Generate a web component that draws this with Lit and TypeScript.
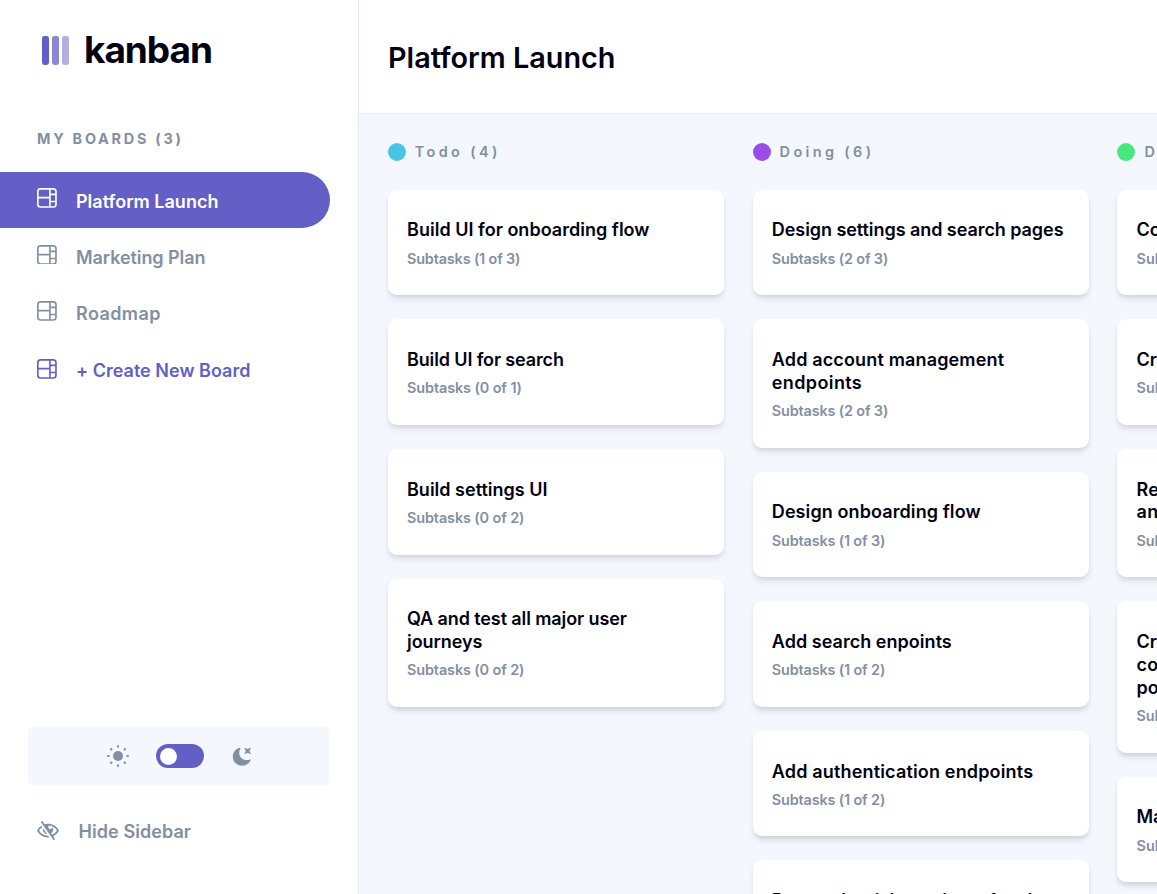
import { LitElement, html, css, svg } from "lit";
import { customElement, property } from "lit/decorators.js";

const BOARD =
  "M0 2.889A2.889 2.889 0 0 1 2.889 0H13.11A2.889 2.889 0 0 1 16 2.889V13.11A2.888 2.888 0 0 1 13.111 16H2.89A2.889 2.889 0 0 1 0 13.111V2.89Zm1.333 5.555v4.667c0 .859.697 1.556 1.556 1.556h6.889V8.444H1.333Zm8.445-1.333V1.333h-6.89A1.556 1.556 0 0 0 1.334 2.89V7.11h8.445Zm4.889-1.333H11.11v4.444h3.556V5.778Zm0 5.778H11.11v3.11h2a1.556 1.556 0 0 0 1.556-1.555v-1.555Zm0-7.112V2.89a1.555 1.555 0 0 0-1.556-1.556h-2v3.111h3.556Z";
const EYE =
  "M8.522 11.223a4.252 4.252 0 0 1-3.654-5.22l3.654 5.22ZM9 12.25A8.685 8.685 0 0 1 1.5 8a8.612 8.612 0 0 1 2.76-2.864l-.86-1.23A10.112 10.112 0 0 0 .208 7.238a1.5 1.5 0 0 0 0 1.524A10.187 10.187 0 0 0 9 13.75c.414 0 .828-.025 1.239-.074l-1-1.43A8.88 8.88 0 0 1 9 12.25Zm8.792-3.488a10.14 10.14 0 0 1-4.486 4.046l1.504 2.148a.375.375 0 0 1-.092.523l-.648.453a.375.375 0 0 1-.523-.092L3.19 1.044A.375.375 0 0 1 3.282.52L3.93.068a.375.375 0 0 1 .523.092l1.735 2.479A10.308 10.308 0 0 1 9 2.25c3.746 0 7.031 2 8.792 4.988a1.5 1.5 0 0 1 0 1.524ZM16.5 8a8.674 8.674 0 0 0-6.755-4.219A1.75 1.75 0 1 0 12.75 5v-.001a4.25 4.25 0 0 1-1.154 5.366l.834 1.192A8.641 8.641 0 0 0 16.5 8Z";
const MOON =
  "M6.474.682c.434-.11.718.406.481.78A6.067 6.067 0 0 0 6.01 4.72c0 3.418 2.827 6.187 6.314 6.187.89.002 1.77-.182 2.584-.54.408-.18.894.165.724.57-1.16 2.775-3.944 4.73-7.194 4.73-4.293 0-7.774-3.41-7.774-7.615 0-3.541 2.466-6.518 5.81-7.37Zm8.433.07c.442-.294.969.232.674.674l-.525.787a1.943 1.943 0 0 0 0 2.157l.525.788c.295.441-.232.968-.674.673l-.787-.525a1.943 1.943 0 0 0-2.157 0l-.786.525c-.442.295-.97-.232-.675-.673l.525-.788a1.943 1.943 0 0 0 0-2.157l-.525-.787c-.295-.442.232-.968.674-.673l.787.525a1.943 1.943 0 0 0 2.157 0l.787-.526Z";

type Line = [text: string, width: number];
interface Task { title: Line[]; subtasks: Line; }
interface Column { name: Line; color: string; tasks: Task[]; }

const task = (subtasks: Line, ...title: Line[]): Task => ({ title, subtasks });

const COLUMNS: Column[] = [
  {
    name: ["Todo (4)", 82.5],
    color: "#49c4e5",
    tasks: [
      task(["Subtasks (1 of 3)", 113.5], ["Build UI for onboarding flow", 242.5]),
      task(["Subtasks (0 of 1)", 115], ["Build UI for search", 157]),
      task(["Subtasks (0 of 2)", 117.5], ["Build settings UI", 140.5]),
      task(["Subtasks (0 of 2)", 117.5], ["QA and test all major user", 220], ["journeys", 75.5]),
    ],
  },
  {
    name: ["Doing (6)", 91.5],
    color: "#9a4de7",
    tasks: [
      task(["Subtasks (2 of 3)", 116.5], ["Design settings and search pages", 291.8]),
      task(["Subtasks (2 of 3)", 116.5], ["Add account management", 232.3], ["endpoints", 90]),
      task(["Subtasks (1 of 3)", 113.5], ["Design onboarding flow", 208.8]),
      task(["Subtasks (1 of 2)", 113.5], ["Add search enpoints", 180]),
      task(["Subtasks (1 of 2)", 113.5], ["Add authentication endpoints", 261.3]),
      task(["Subtasks (1 of 3)", 113.5], ["Research pricing points of various", 292], ["competitors and trial different", 270], ["business models", 140]),
    ],
  },
  {
    name: ["Done (7)", 86],
    color: "#49e77f",
    tasks: [
      task(["Subtasks (1 of 1)", 112], ["Conduct 5 wireframe tests", 228]),
      task(["Subtasks (1 of 1)", 112], ["Create wireframe prototype", 241]),
      task(["Subtasks (3 of 3)", 117], ["Review results of usability tests", 281], ["and iterate", 95]),
      task(["Subtasks (2 of 2)", 117], ["Create paper prototypes and", 250], ["conduct 10 usability tests with", 271], ["potential customers", 172]),
      task(["Subtasks (1 of 1)", 112], ["Market discovery", 148]),
    ],
  },
];

/* A single line of text whose tracking is tuned so that it spans a set width. */
@customElement("tracked-text")
class TrackedText extends LitElement {
  @property() text = "";
  @property({ type: Number }) span = 0;

  static styles = css`
    :host { display: block; white-space: nowrap; }
    .run { display: inline-block; vertical-align: top; font-kerning: normal; }
  `;

  updated() {
    const run = this.renderRoot.querySelector<HTMLElement>(".run")!;
    run.style.letterSpacing = "0.001px";
    const natural = run.getBoundingClientRect().width;
    run.style.letterSpacing = `${(this.span - natural) / (this.text.length - 1)}px`;
  }

  render() {
    return html`<span class="run">${this.text}</span>`;
  }
}

const tracked = ([text, width]: Line) =>
  html`<tracked-text .text=${text} .span=${width}></tracked-text>`;

const boardIcon = html`<svg class="icon" viewBox="0 0 16 16" width="19.8" height="19.8"><path fill="currentColor" d=${BOARD} /></svg>`;

@customElement("task-card")
class TaskCard extends LitElement {
  @property({ attribute: false }) task!: Task;

  static styles = css`
    :host {
      display: block;
      box-sizing: border-box;
      padding: 29.7px 19.2px 27.5px;
      border-radius: 9px;
      background: #fff;
      box-shadow: 0 4.8px 7.2px -1.2px rgba(0, 0, 0, 0.1), 0 2.4px 4.8px -2.4px rgba(0, 0, 0, 0.1);
    }
    .title { font-size: 18px; line-height: 22.8px; font-weight: 560; color: #000112; }
    .sub { margin-top: 7.6px; font-size: 14.4px; line-height: 18px; font-weight: 560; color: #828fa3; }
  `;

  render() {
    return html`
      <div class="title">${this.task.title.map(tracked)}</div>
      <div class="sub">${tracked(this.task.subtasks)}</div>
    `;
  }
}

@customElement("board-sidebar")
class BoardSidebar extends LitElement {
  static styles = css`
    :host {
      display: flex;
      flex-direction: column;
      box-sizing: border-box;
      width: 359px;
      flex: none;
      background: #fff;
      border-right: 1px solid #e4ebfa;
    }
    svg { display: block; flex: none; }
    .logo { display: flex; align-items: center; gap: 15px; height: 44px; margin: 28px 0 0 42px; }
    .bars { display: flex; gap: 3px; }
    .bar { width: 7px; height: 29px; border-radius: 2.4px; background: #635fc7; }
    .bar.mid { opacity: 0.75; }
    .bar.light { opacity: 0.5; }
    .word { font-size: 37px; line-height: 44px; font-weight: 700; color: #000112; }
    .label { margin: 57px 0 0 37px; font-size: 14.4px; line-height: 20px; font-weight: 650; color: #828fa3; }
    .nav { display: flex; flex-direction: column; margin-top: 22.6px; }
    .item {
      display: flex;
      align-items: center;
      gap: 19.2px;
      box-sizing: border-box;
      width: 330px;
      height: 56.2px;
      padding-left: 37px;
      border-radius: 0 29px 29px 0;
      font-size: 18px;
      line-height: 24px;
      font-weight: 600;
      color: #828fa3;
    }
    .item .icon { margin-bottom: 2.6px; }
    .item tracked-text { margin-top: 4px; }
    .item.active { background: #635fc7; color: #fff; }
    .item.create { color: #635fc7; height: 58px; }
    .item.create .icon { margin-bottom: 0; }
    .item.create tracked-text { margin-top: 3px; }
    .foot { margin-top: auto; }
    .theme {
      display: flex;
      align-items: center;
      justify-content: center;
      gap: 28px;
      height: 57.6px;
      margin: 0 29px 0 28px;
      border-radius: 5px;
      background: #f4f7fd;
      color: #828fa3;
    }
    .sun { margin: 0 -1px 0 1px; }
    .switch { box-sizing: border-box; width: 48px; height: 24px; padding: 3.6px; border-radius: 12px; background: #635fc7; }
    .knob { width: 17px; height: 17px; border-radius: 50%; background: #fff; }
    .hide {
      display: flex;
      align-items: center;
      gap: 19.5px;
      margin: 34px 0 50px 37px;
      height: 25px;
      font-size: 18px;
      line-height: 24px;
      font-weight: 560;
      color: #828fa3;
    }
    .hide svg { margin-bottom: 2px; }
  `;

  render() {
    const rays = [0, 45, 90, 135, 180, 225, 270, 315];
    return html`
      <div class="logo">
        <div class="bars">
          <div class="bar"></div>
          <div class="bar mid"></div>
          <div class="bar light"></div>
        </div>
        <div class="word">${tracked(["kanban", 129])}</div>
      </div>
      <div class="label">${tracked(["MY BOARDS (3)", 144])}</div>
      <div class="nav">
        <div class="item active">${boardIcon}${tracked(["Platform Launch", 142.5])}</div>
        <div class="item">${boardIcon}${tracked(["Marketing Plan", 129.5])}</div>
        <div class="item">${boardIcon}${tracked(["Roadmap", 84.5])}</div>
        <div class="item create">${boardIcon}${tracked(["+ Create New Board", 174.5])}</div>
      </div>
      <div class="foot">
        <div class="theme">
          <svg class="sun" viewBox="-11 -11 22 22" width="22" height="22">
            <circle r="5" fill="currentColor" />
            ${rays.map((a) => svg`<path d="M0 -10V-9.2" transform="rotate(${a})" stroke="currentColor" stroke-width="2" stroke-linecap="round" />`)}
          </svg>
          <div class="switch"><div class="knob"></div></div>
          <svg viewBox="0 0 16 16" width="19.2" height="19.2"><path fill="currentColor" d=${MOON} /></svg>
        </div>
        <div class="hide">
          <svg viewBox="0 0 18 16" width="22" height="19.2"><path fill="currentColor" d=${EYE} /></svg>
          ${tracked(["Hide Sidebar", 112.5])}
        </div>
      </div>
    `;
  }
}

@customElement("app-root")
class AppRoot extends LitElement {
  static styles = css`
    :host {
      display: flex;
      height: 100vh;
      overflow: hidden;
      font-family: Inter, "Open Sans", sans-serif;
      background: #f4f7fd;
    }
    .main { flex: 1; min-width: 0; display: flex; flex-direction: column; }
    .header {
      display: flex;
      align-items: center;
      box-sizing: border-box;
      flex: none;
      height: 114px;
      padding: 2px 0 0 29px;
      border-bottom: 1px solid #e4ebfa;
      background: #fff;
      font-size: 28.8px;
      line-height: 36px;
      font-weight: 560;
      color: #000112;
    }
    .columns { display: flex; gap: 28.8px; flex: 1; min-height: 0; overflow: hidden; padding: 27.8px 28.8px 0; }
    .column { display: flex; flex-direction: column; gap: 24px; width: 336px; flex: none; }
    .name { display: flex; align-items: center; gap: 9px; height: 20px; margin-bottom: 4px; font-size: 14.4px; line-height: 20px; font-weight: 560; color: #828fa3; }
    .dot { width: 18px; height: 18px; border-radius: 50%; }
  `;

  render() {
    return html`
      <board-sidebar></board-sidebar>
      <div class="main">
        <div class="header">${tracked(["Platform Launch", 227.5])}</div>
        <div class="columns">
          ${COLUMNS.map(
            (c) => html`
              <div class="column">
                <div class="name">
                  <div class="dot" style="background:${c.color}"></div>
                  ${tracked(c.name)}
                </div>
                ${c.tasks.map((t) => html`<task-card .task=${t}></task-card>`)}
              </div>
            `,
          )}
        </div>
      </div>
    `;
  }
}
